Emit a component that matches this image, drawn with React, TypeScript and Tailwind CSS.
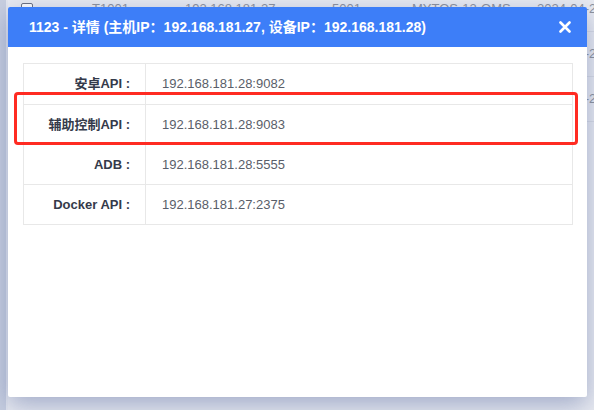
import React from "react";

// ─── Device detail dialog over a dimmed device list ───────────────────

const FONT = { fontFamily: '"Liberation Sans", "Noto Sans CJK SC", sans-serif' };

const ROWS = [
  { label: "安卓API :", value: "192.168.181.28:9082" },
  { label: "辅助控制API :", value: "192.168.181.28:9083" },
  { label: "ADB :", value: "192.168.181.28:5555" },
  { label: "Docker API :", value: "192.168.181.27:2375" },
];

function BackgroundList() {
  return (
    <div className="flex h-[410px] w-[594px] overflow-hidden bg-[#dfe3ec]">
      {/* sidebar edge */}
      <div className="w-[6px] shrink-0 bg-[#c8cfe0]" />
      <div className="w-[2px] shrink-0 bg-[#e4e7ef]" />
      <div className="flex-1 overflow-hidden bg-[#e9ebf1]">
        <div className="-mt-[13px] flex flex-col text-[13px] text-[#8d929c]">
          {["T1001", "T1002", "T1003"].map((id) => (
            <div key={id} className="flex h-[45px] items-center whitespace-nowrap border-b border-[#d9dce4]">
              <div className="ml-[13px] h-[12px] w-[12px] shrink-0 rounded-[2px] border border-[#6b7080] bg-white" />
              <div className="ml-[59px] w-[93px] shrink-0">{id}</div>
              <div className="w-[147px] shrink-0">192.168.181.27</div>
              <div className="w-[80px] shrink-0">5001</div>
              <div className="w-[125px] shrink-0">MYTOS-12-OMS</div>
              <div className="shrink-0">2024-04-20</div>
            </div>
          ))}
        </div>
      </div>
    </div>
  );
}

function CloseIcon() {
  return (
    <svg width="12" height="12" viewBox="0 0 12 12" fill="none">
      <path d="M1.5 1.5L10.5 10.5M10.5 1.5L1.5 10.5" stroke="white" strokeWidth="2.6" strokeLinecap="round" />
    </svg>
  );
}

export default function App() {
  return (
    <div className="relative h-[410px] w-[594px] overflow-hidden" style={FONT}>
      <BackgroundList />

      {/* ── Dialog ── */}
      <div className="absolute left-[8px] top-[7px] h-[390px] w-[579px] rounded-[2px] bg-white shadow-[0_8px_26px_rgba(70,90,150,0.45)]">
        <div className="flex h-[40px] items-center justify-between rounded-t-[2px] bg-[#3d7ef8] pl-[21px] pr-[16px]">
          <span className="text-[14px] font-bold text-white">
            1123 - 详情 (主机IP：192.168.181.27, 设备IP：192.168.181.28)
          </span>
          <CloseIcon />
        </div>

        <div className="pl-[15px] pr-[14px] pt-[16px]">
          <div className="border border-[#e8e8e8]">
            {ROWS.map((row, i) => (
              <div
                key={row.label}
                className={`flex h-[40px] items-center ${i > 0 ? "border-t border-[#e8e8e8]" : ""}`}
              >
                <div className="flex h-full w-[122px] shrink-0 items-center justify-end border-r border-[#e8e8e8] pr-[15px] text-[13px] font-bold text-[#343a4a]">
                  {row.label}
                </div>
                <div className="pl-[16px] text-[13px] text-[#595e69]">{row.value}</div>
              </div>
            ))}
          </div>
        </div>

        {/* annotation box */}
        <div className="absolute left-[6px] top-[85px] h-[53px] w-[564px] rounded-[4px] border-[3px] border-[#ff2b22]" />
      </div>
    </div>
  );
}
